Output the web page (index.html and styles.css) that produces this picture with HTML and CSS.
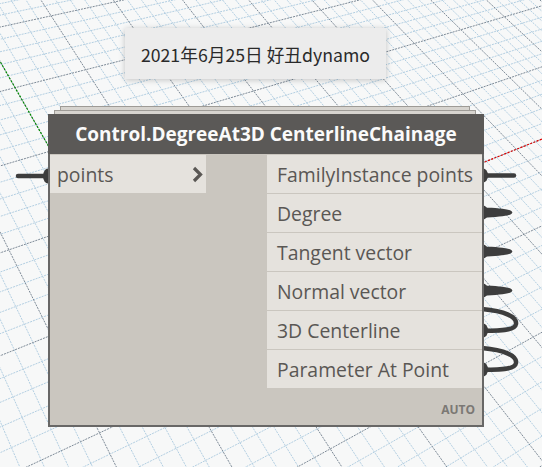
FILE: index.html
```html
<!DOCTYPE html>
<html>
<head>
<meta charset="utf-8">
<link rel="stylesheet" href="styles.css">
</head>
<body>
<div class="canvas">
  <svg id="grid" class="grid" width="542" height="467" viewBox="0 0 542 467"></svg>
  <div class="note">2021年6月25日 好丑dynamo</div>
  <svg class="wires" width="542" height="467" viewBox="0 0 542 467">
    <g fill="#3d3d3d" stroke="none">
      <ellipse cx="48" cy="176" rx="5" ry="7.5"/>
      <ellipse cx="483" cy="175.5" rx="5" ry="7"/>
      <ellipse cx="483" cy="212.5" rx="5" ry="7"/>
      <ellipse cx="483" cy="251.5" rx="5" ry="7"/>
      <ellipse cx="483" cy="290.5" rx="5" ry="7"/>
      <ellipse cx="483" cy="330.5" rx="5" ry="7"/>
      <ellipse cx="483" cy="369.5" rx="5" ry="7"/>
      <path d="M483,207.5 C495,207.8 505,208.7 510,210.3 Q514.5,212.5 510,214.8 C505,216.2 495,217.2 483,217.8 Z"/>
      <path d="M483,246.5 C495,246.8 505,247.7 510,249.3 Q514.5,251.5 510,253.8 C505,255.2 495,256.2 483,256.8 Z"/>
      <path d="M483,285.5 C495,285.8 505,286.7 510,288.3 Q514.5,290.5 510,292.8 C505,294.2 495,295.2 483,295.8 Z"/>
    </g>
    <g fill="none" stroke="#3d3d3d" stroke-width="4.5" stroke-linecap="round">
      <path d="M18,176 L48,176"/>
      <path d="M483,175.5 L514,175.5"/>
      <path d="M482,309 C505,311 517,317 516,324 C515,331 498,331 482,330.5"/>
      <path d="M482,348 C505,350 517,356 516,363 C515,370 498,370 482,369.5"/>
    </g>
  </svg>
  <div class="node">
    <div class="layer layer1"></div>
    <div class="layer layer2"></div>
    <div class="header">Control.DegreeAt3D CenterlineChainage</div>
    <div class="body">
      <div class="ports">
        <div class="inputs">
          <div class="port in"><span>points</span>
            <svg class="chev" width="11" height="17" viewBox="0 0 11 17"><polyline points="2,2 8.5,8.5 2,15" fill="none" stroke="#5a5754" stroke-width="3.2"/></svg>
          </div>
        </div>
        <div class="outputs">
          <div class="port out">FamilyInstance points</div>
          <div class="port out">Degree</div>
          <div class="port out">Tangent vector</div>
          <div class="port out">Normal vector</div>
          <div class="port out">3D Centerline</div>
          <div class="port out">Parameter At Point</div>
        </div>
      </div>
      <div class="footer">AUTO</div>
    </div>
  </div>
</div>
<script src="script.js"></script>
</body>
</html>
```
FILE: styles.css
```css
* { box-sizing: border-box; }
html, body { margin: 0; padding: 0; }
body {
  width: 542px;
  height: 467px;
  overflow: hidden;
  background: #f7f8f8;
  font-family: "Open Sans", sans-serif;
}
.canvas {
  position: relative;
  width: 542px;
  height: 467px;
  overflow: hidden;
  background: #f7f8f8;
}
.grid, .wires {
  position: absolute;
  left: 0;
  top: 0;
}
.note {
  position: absolute;
  left: 125px;
  top: 28px;
  width: 261px;
  height: 51px;
  background: #ececec;
  box-shadow: 0 1px 6px rgba(0, 0, 0, 0.22);
  display: flex;
  align-items: center;
  justify-content: center;
  font-family: "Noto Sans CJK SC", sans-serif;
  font-size: 17.7px;
  color: #2a2a2a;
}
.node {
  position: absolute;
  left: 48px;
  top: 106px;
  width: 436px;
  display: flex;
  flex-direction: column;
}
.layer {
  height: 4px;
  background: #d7d4cf;
  border: 1px solid #9e9b96;
  border-bottom: none;
}
.layer1 { margin: 0 14px 0 12px; }
.layer2 { margin: 0 8px 0 6px; }
.header {
  height: 40px;
  background: #5b5957;
  color: #fafafa;
  font-weight: 700;
  font-size: 19px;
  display: flex;
  align-items: center;
  justify-content: center;
  white-space: nowrap;
}
.body {
  height: 273px;
  background: #cac6bf;
  border: 2px solid #686766;
  border-top: none;
  display: flex;
  flex-direction: column;
}
.ports {
  display: flex;
  padding-top: 1px;
}
.inputs { width: 156px; }
.outputs { margin-left: 61px; width: 215px; }
.port {
  height: 38px;
  margin-bottom: 1px;
  background: #e5e2dd;
  color: #5a5754;
  font-size: 19.4px;
  display: flex;
  align-items: center;
  white-space: nowrap;
}
.in {
  padding: 0 3px 0 7px;
  justify-content: space-between;
}
.out { padding-left: 10px; }
.footer {
  margin-top: auto;
  padding: 0 7px 8px 0;
  text-align: right;
  font-size: 12px;
  line-height: 14px;
  font-weight: 700;
  color: #7b7874;
}
```
FILE: script.js
```js
(function () {
  var svg = document.getElementById('grid');
  var NS = 'http://www.w3.org/2000/svg';
  var VA = [-630, -1041], VB = [1820, -372], O = [137, 301];
  var a = 0.0097, b = 0.0126;
  function P(u, v) {
    var p = a * u, q = b * v, w = p + q + 1;
    return [(p * VB[0] + q * VA[0] + O[0]) / w, (p * VB[1] + q * VA[1] + O[1]) / w];
  }
  function line(p1, p2, cls) {
    var l = document.createElementNS(NS, 'line');
    l.setAttribute('x1', p1[0].toFixed(2));
    l.setAttribute('y1', p1[1].toFixed(2));
    l.setAttribute('x2', p2[0].toFixed(2));
    l.setAttribute('y2', p2[1].toFixed(2));
    l.setAttribute('class', cls);
    svg.appendChild(l);
  }
  var i, lo;
  var groups = { minor: [], major: [] };
  for (i = -80; i <= 160; i++) {
    var cls = (i % 5 === 0) ? 'major' : 'minor';
    lo = (0.15 - 1 - a * i) / b;
    groups[cls].push([P(i, Math.max(lo, -200)), P(i, 2000)]);
    lo = (0.15 - 1 - b * i) / a;
    groups[cls].push([P(Math.max(lo, -200), i), P(2000, i)]);
  }
  groups.minor.forEach(function (s) { line(s[0], s[1], 'minor'); });
  groups.major.forEach(function (s) { line(s[0], s[1], 'major'); });
  line(P(0, 0), P(2000, 0), 'axis-x');
  line(P(0, 0), P(0, 2000), 'axis-y');
  var st = document.createElementNS(NS, 'style');
  st.textContent =
    '.minor{stroke:#b3cfe2;stroke-width:1;stroke-dasharray:2 1;}' +
    '.major{stroke:#7d8a97;stroke-width:1;stroke-dasharray:2 1;}' +
    '.axis-x{stroke:#e00000;stroke-width:1.2;stroke-dasharray:2 1.5;}' +
    '.axis-y{stroke:#008a00;stroke-width:1.2;stroke-dasharray:2 1.5;}';
  svg.appendChild(st);
})();
```
